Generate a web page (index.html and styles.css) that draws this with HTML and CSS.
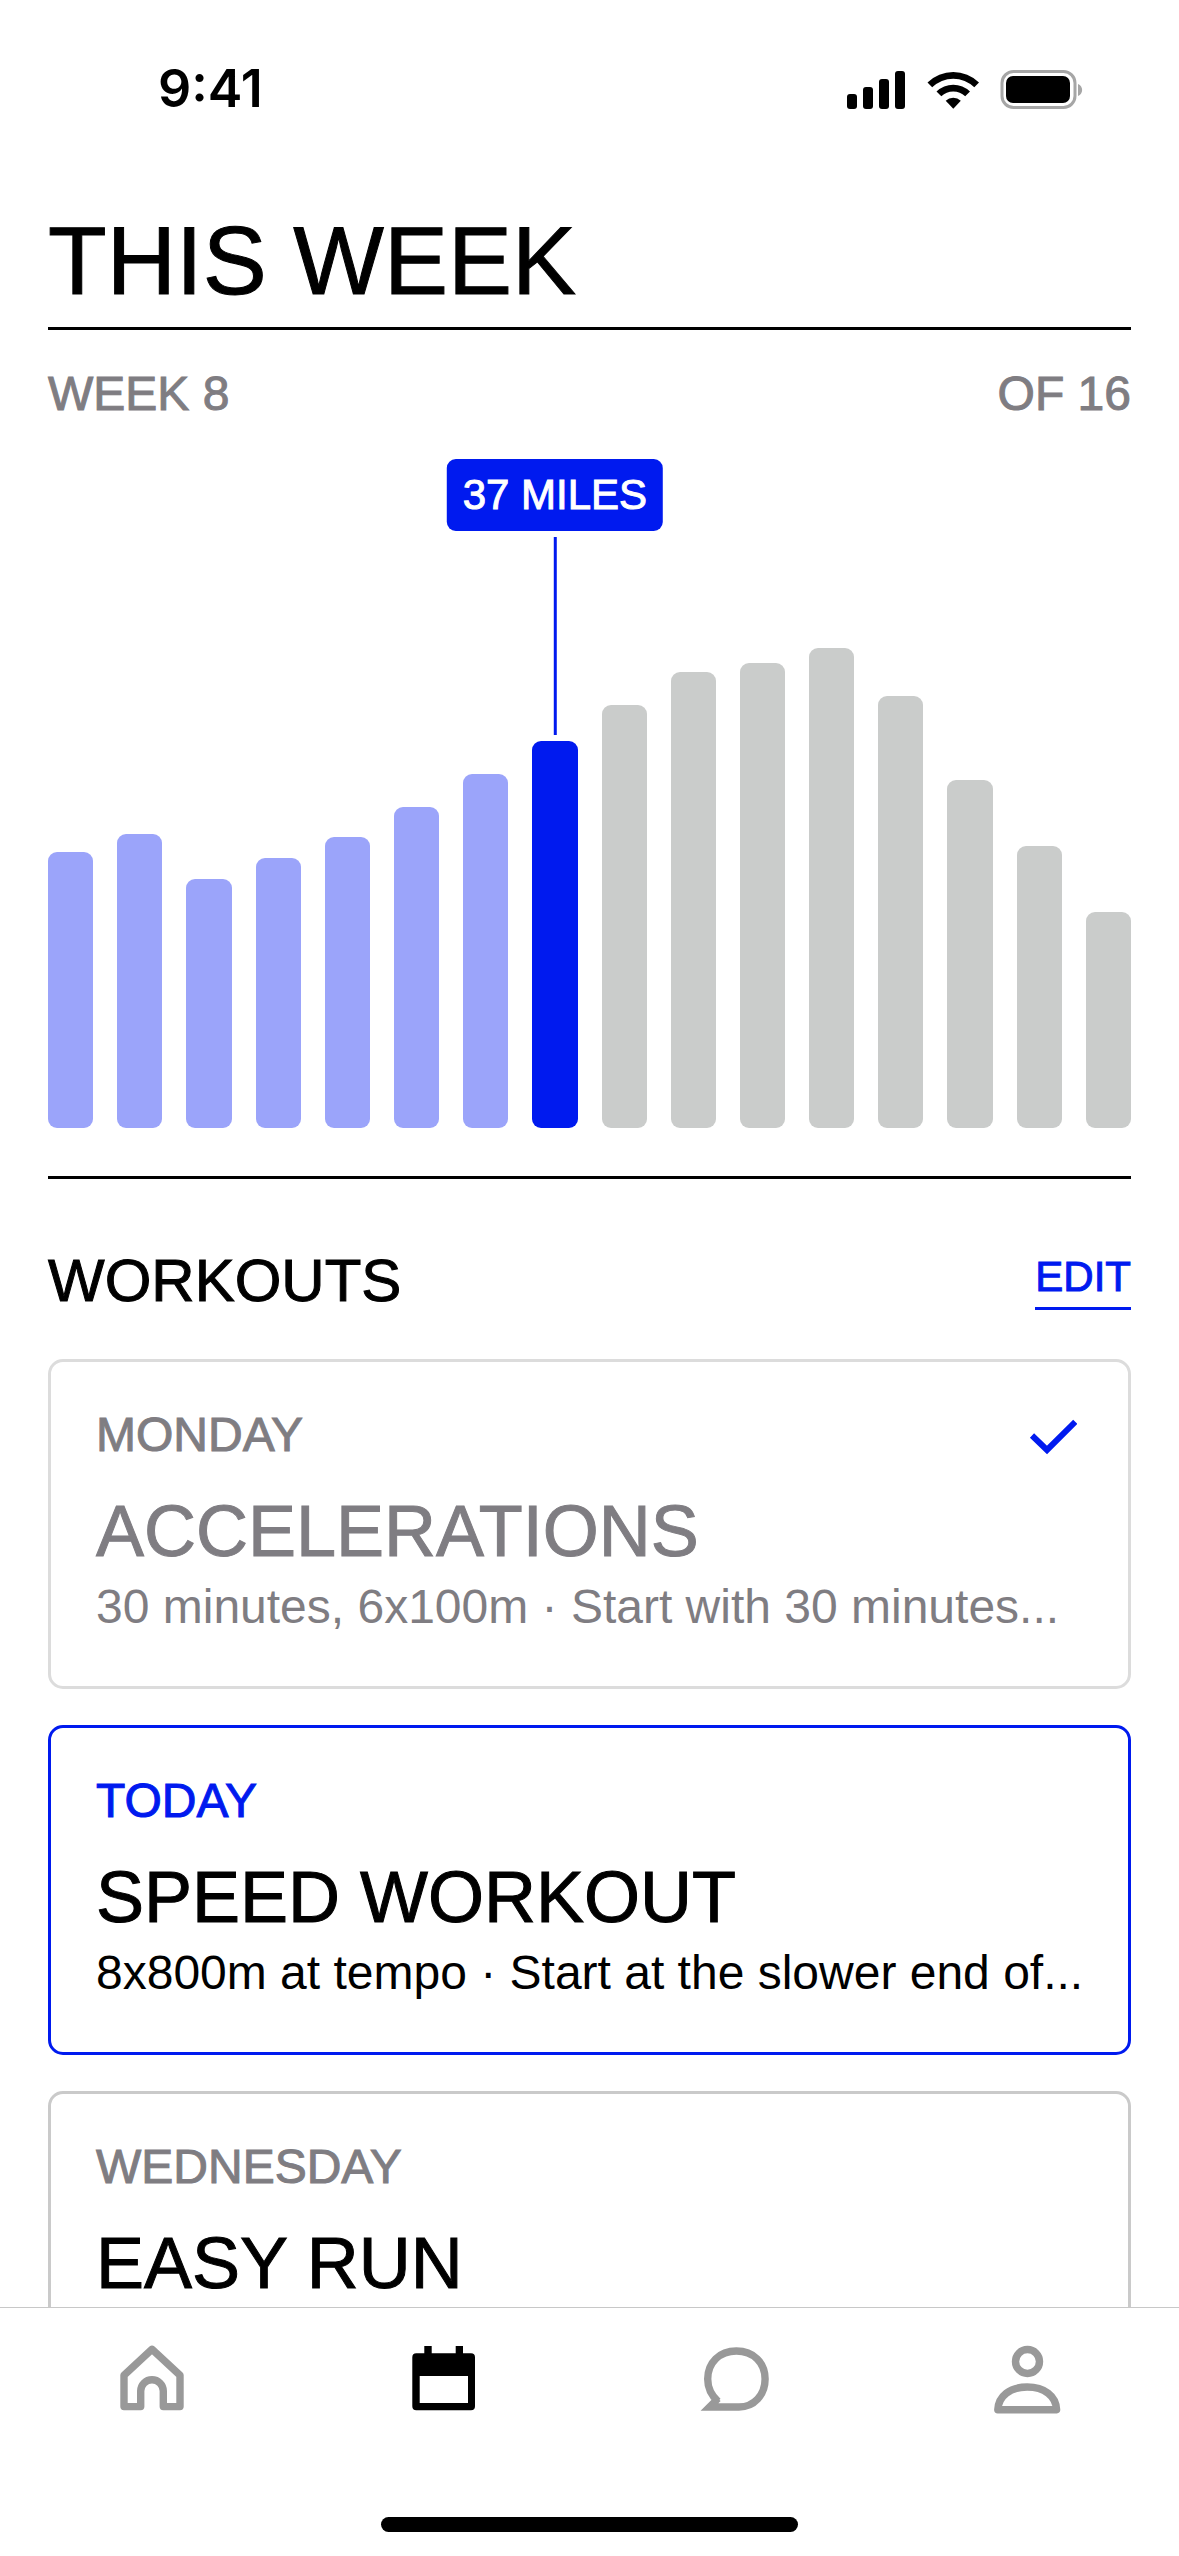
FILE: index.html
```html
<!DOCTYPE html>
<html lang="en">
<head>
<meta charset="utf-8">
<meta name="viewport" content="width=device-width, initial-scale=1">
<title>This Week</title>
<link rel="stylesheet" href="styles.css">
</head>
<body>
<header class="status">
  <time class="status-time">9:41</time>
  <svg class="status-icons" viewBox="0 0 236 39" aria-hidden="true">
    <rect x="0" y="24" width="10" height="15" rx="3"/>
    <rect x="16" y="17" width="10" height="22" rx="3"/>
    <rect x="32" y="9" width="10" height="30" rx="3"/>
    <rect x="48" y="1" width="10" height="38" rx="3"/>
    <path d="M80.5 12.5 A37 37 0 0 1 132 12.5 L127.3 17.3 A30 30 0 0 0 85.2 17.3 Z"/>
    <path d="M89.5 21.5 A24 24 0 0 1 123 21.5 L118.2 26.3 A17.5 17.5 0 0 0 94.3 26.3 Z"/>
    <path d="M98.7 30.7 A11 11 0 0 1 113.8 30.7 L106.3 38.8 Z"/>
    <rect class="battery-case" x="155" y="1.5" width="73" height="36" rx="11.5"/>
    <rect x="159" y="6" width="64" height="27" rx="7"/>
    <path class="battery-tip" d="M231 14 C236.5 16 236.5 24 231 26 Z"/>
  </svg>
</header>

<main class="screen">
  <h1 class="title">THIS WEEK</h1>
  <section class="progress">
    <div class="progress-labels"><span>WEEK 8</span><span>OF 16</span></div>
    <div class="chart">
      <div class="bar done" style="height:276px"></div>
      <div class="bar done" style="height:294px"></div>
      <div class="bar done" style="height:249px"></div>
      <div class="bar done" style="height:270px"></div>
      <div class="bar done" style="height:291px"></div>
      <div class="bar done" style="height:321px"></div>
      <div class="bar done" style="height:354px"></div>
      <div class="bar current" style="height:387px"><div class="callout"><span class="callout-label">37 MILES</span></div></div>
      <div class="bar" style="height:423px"></div>
      <div class="bar" style="height:456px"></div>
      <div class="bar" style="height:465px"></div>
      <div class="bar" style="height:480px"></div>
      <div class="bar" style="height:432px"></div>
      <div class="bar" style="height:348px"></div>
      <div class="bar" style="height:282px"></div>
      <div class="bar" style="height:216px"></div>
    </div>
  </section>

  <section class="workouts">
    <div class="workouts-head">
      <h2 class="workouts-title">WORKOUTS</h2>
      <a class="edit" href="#edit">EDIT</a>
    </div>
    <article class="card complete">
      <div class="card-head">
        <p class="day">MONDAY</p>
        <svg class="check" viewBox="0 0 48 40" role="img" aria-label="Completed"><path d="M3 20.5 L18 35 L46.3 6.8"/></svg>
      </div>
      <h3 class="name">ACCELERATIONS</h3>
      <p class="detail">30 minutes, 6x100m · Start with 30 minutes...</p>
    </article>
    <article class="card today">
      <div class="card-head"><p class="day">TODAY</p></div>
      <h3 class="name">SPEED WORKOUT</h3>
      <p class="detail">8x800m at tempo · Start at the slower end of...</p>
    </article>
    <article class="card">
      <div class="card-head"><p class="day">WEDNESDAY</p></div>
      <h3 class="name">EASY RUN</h3>
    </article>
  </section>
</main>

<footer class="dock">
  <nav class="tabs">
    <a class="tab" href="#home" aria-label="Home">
      <svg class="tab-icon" viewBox="0 0 72 72"><path class="line" d="M36 6.3 L8 32.2 V63.6 H24.7 V48 a11.3 11.3 0 0 1 22.6 0 V63.6 H64 V32.2 Z"/></svg>
    </a>
    <a class="tab active" href="#plan" aria-label="Plan" aria-current="page">
      <svg class="tab-icon" viewBox="0 0 72 72"><path class="solid" fill-rule="evenodd" d="M16.3 3 H23.7 V10.3 H47.7 V3 H55 V10.3 H63 a4 4 0 0 1 4 4 V63.3 a4 4 0 0 1 -4 4 H8.3 a4 4 0 0 1 -4 -4 V14.3 a4 4 0 0 1 4 -4 H16.3 Z M11.7 33 V60 H60 V33 Z"/></svg>
    </a>
    <a class="tab" href="#chat" aria-label="Messages">
      <svg class="tab-icon" viewBox="0 0 72 72"><path class="line sharp" d="M19 58.5 C12.5 52.5 8.7 45 8.7 36 C8.7 19.5 20.5 8 37.4 8 S66.1 19.5 66.1 36 C66.1 52 55 64 40 64 H10.5 L19 55.5"/></svg>
    </a>
    <a class="tab" href="#profile" aria-label="Profile">
      <svg class="tab-icon" viewBox="0 0 72 72"><circle class="line" cx="36.5" cy="18.5" r="12"/><path class="line" d="M6.8 66.7 C7.5 53 19 44 36.2 44 S65 53 65.6 66.7 Z"/></svg>
    </a>
  </nav>
  <div class="home-indicator"></div>
</footer>
</body>
</html>
```

FILE: styles.css
```css
:root {
  --blue: #001aef;
  --blue-soft: #9ba4fa;
  --gray-text: #7f7d82;
  --gray-bar: #cacccb;
}

* { box-sizing: border-box; }

body {
  margin: 0;
  height: 100vh;
  display: flex;
  flex-direction: column;
  overflow: hidden;
  background: #fff;
  color: #000;
  font-family: "Liberation Sans", Arial, sans-serif;
  font-size: 48px;
  line-height: 56px;
}

h1, h2, h3, p { margin: 0; font-weight: 400; }
a { color: inherit; text-decoration: none; }

/* Capitals are set slightly heavier than the regular weight */
.title,
.progress-labels,
.callout-label,
.workouts-title,
.edit,
.day,
.name { -webkit-text-stroke: 1px currentColor; }

/* Status bar */
.status {
  flex: none;
  display: flex;
  justify-content: space-between;
  align-items: center;
  padding: 59px 96px 58px 158px;
}
.status-time {
  font-family: Inter, sans-serif;
  font-size: 52px;
  font-weight: 600;
  line-height: 60px;
}
.status-icons { width: 236px; height: 39px; }
.battery-case { fill: none; stroke: #a6a6a6; stroke-width: 3; }
.battery-tip { fill: #a6a6a6; }

/* Scrolling content */
.screen {
  flex: 1;
  min-height: 0;
  overflow-y: auto;
  scrollbar-width: none;
  padding: 30px 48px 0;
}
.title {
  padding-bottom: 12px;
  border-bottom: 3px solid #000;
  font-size: 96px;
  line-height: 108px;
}
.progress {
  display: flex;
  flex-direction: column;
  gap: 36px;
  padding: 36px 0 48px;
  border-bottom: 3px solid #000;
}
.progress-labels {
  display: flex;
  justify-content: space-between;
  color: var(--gray-text);
}
.chart {
  display: flex;
  align-items: flex-end;
  gap: 24px;
  height: 670px;
}
.bar {
  position: relative;
  flex: 1;
  border-radius: 9px;
  background: var(--gray-bar);
}
.bar.done { background: var(--blue-soft); }
.bar.current { background: var(--blue); }

.callout {
  position: absolute;
  bottom: 100%;
  left: 50%;
  transform: translateX(-50%);
  display: flex;
  flex-direction: column;
  align-items: center;
  gap: 6px;
  padding-bottom: 6px;
}
.callout::after {
  content: "";
  width: 3px;
  height: 198px;
  background: var(--blue);
}
.callout-label {
  padding: 8px 16px;
  border-radius: 9px;
  background: var(--blue);
  color: #fff;
  font-size: 42px;
  white-space: nowrap;
}

/* Workouts */
.workouts {
  display: flex;
  flex-direction: column;
  gap: 36px;
  padding: 66px 0 36px;
}
.workouts-head {
  display: flex;
  justify-content: space-between;
  align-items: center;
  padding-bottom: 6px;
}
.workouts-title { font-size: 60px; line-height: 72px; }
.edit {
  padding-bottom: 6px;
  border-bottom: 3px solid var(--blue);
  color: var(--blue);
  font-size: 42px;
  line-height: 48px;
}
.card {
  padding: 45px 45px 47px;
  border: 3px solid #cacaca;
  border-radius: 15px;
}
.card-head {
  display: flex;
  justify-content: space-between;
  align-items: center;
  padding-bottom: 24px;
}
.day { color: var(--gray-text); }
.name { font-size: 72px; line-height: 88px; }
.detail { line-height: 64px; white-space: nowrap; }
.check {
  width: 48px;
  height: 40px;
  margin-right: 6px;
  fill: none;
  stroke: var(--blue);
  stroke-width: 6;
}
.card.complete { border-color: #dcdcdc; color: var(--gray-text); }
.card.today { border-color: var(--blue); }
.card.today .day { color: var(--blue); }

/* Bottom tab bar */
.dock {
  flex: none;
  display: flex;
  flex-direction: column;
  align-items: center;
  gap: 102px;
  padding: 35px 6px 24px;
  border-top: 1px solid #c8c8c8;
  background: #fff;
}
.tabs { display: flex; align-self: stretch; }
.tab {
  flex: 1;
  display: flex;
  justify-content: center;
  color: #999;
}
.tab.active { color: #000; }
.tab-icon { width: 72px; height: 72px; }
.line {
  fill: none;
  stroke: currentColor;
  stroke-width: 7.4;
  stroke-linejoin: round;
}
.line.sharp { stroke-linejoin: miter; }
.solid { fill: currentColor; }
.home-indicator {
  width: 417px;
  height: 15px;
  border-radius: 8px;
  background: #000;
}
```
